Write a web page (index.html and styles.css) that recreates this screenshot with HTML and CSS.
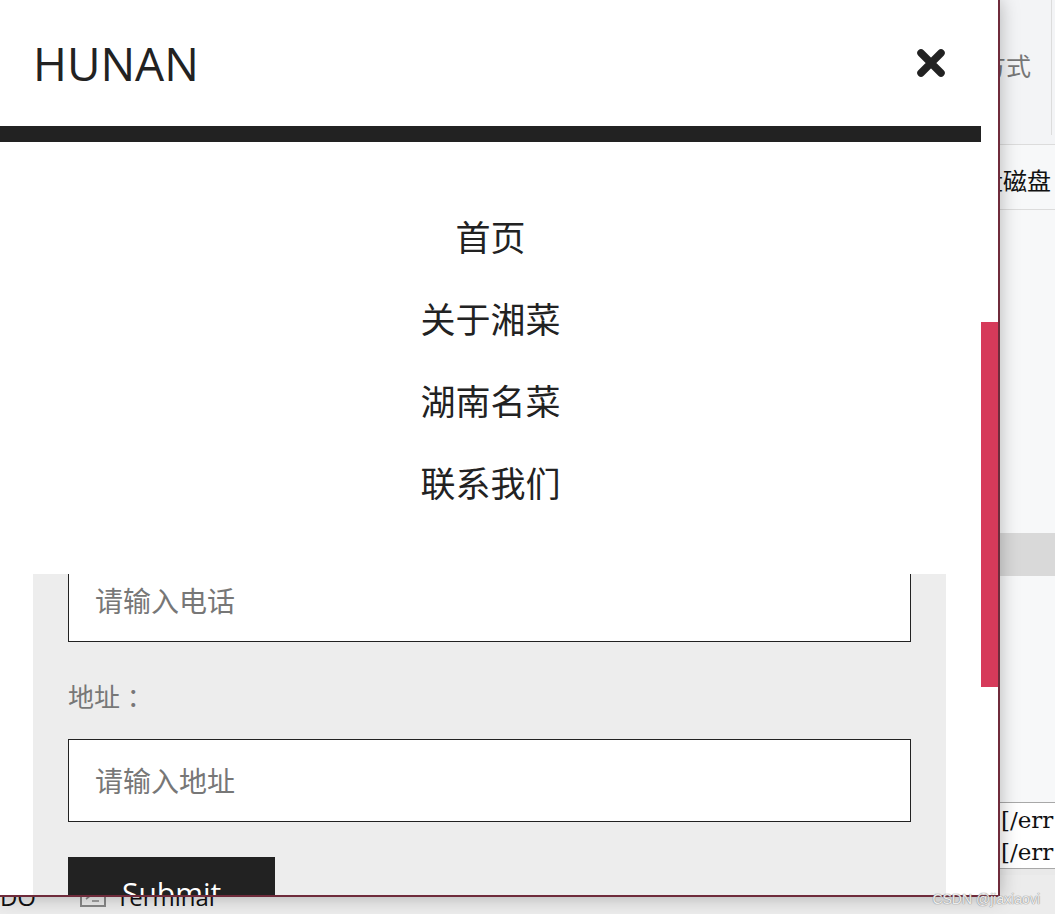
FILE: index.html
```html
<!DOCTYPE html>
<html lang="zh-CN">
<head>
  <meta charset="UTF-8">
  <title>HUNAN</title>
  <link rel="stylesheet" href="styles.css">
</head>
<body>
  <div class="screen">
    <div class="browser">
      <div class="page">
        <div class="menu">
          <div class="menu-head">
            <span class="logo">HUNAN</span>
            <button class="close" type="button">
              <svg width="30" height="30" viewBox="0 0 30 30">
                <path d="M5 5 L25 25 M25 5 L5 25" stroke="#222" stroke-width="7.5" stroke-linecap="round" fill="none"/>
              </svg>
            </button>
          </div>
          <div class="menu-bar"></div>
          <ul class="nav">
            <li>首页</li>
            <li>关于湘菜</li>
            <li>湖南名菜</li>
            <li>联系我们</li>
          </ul>
        </div>

        <form class="card">
          <label>电话 ：</label>
          <input type="text" placeholder="请输入电话">
          <label>地址 ：</label>
          <input type="text" placeholder="请输入地址">
          <button class="submit" type="button">Submit</button>
        </form>
      </div>
      <div class="track"><div class="thumb"></div></div>
    </div>

    <!-- window behind the browser -->
    <div class="side">
      <div class="side-top">
        <div class="side-tab"><span class="side-title">方式</span></div>
      </div>
      <div class="side-row"><span class="side-cut">盘</span>磁盘</div>
      <div class="side-blank"></div>
      <div class="side-band"></div>
      <div class="side-blank2"></div>
      <div class="side-log">
        <div>[/err</div>
        <div>[/err</div>
      </div>
      <div class="side-rest"></div>
    </div>

    <div class="dock">
      <span class="dock-todo">TODO</span>
      <span class="dock-icon">
        <svg width="26" height="20" viewBox="0 0 26 20">
          <rect x="1" y="1" width="24" height="18" fill="none" stroke="#888" stroke-width="2"/>
          <path d="M6 6 L10 9 L6 12 M12 14 L19 14" stroke="#888" stroke-width="1.6" fill="none"/>
        </svg>
      </span>
      <span class="dock-label">Terminal</span>
    </div>

    <div class="watermark">CSDN @jiaxiaovi</div>
  </div>
</body>
</html>
```

FILE: styles.css
```css
body {
  margin: 0;
  width: 1055px;
  height: 914px;
  overflow: hidden;
  background-color: #f4f4f4;
  font-family: "Open Sans", "Noto Sans CJK SC", sans-serif;
  color: #222;
}

.screen {
  position: relative;
  display: grid;
  grid-template-columns: 1000px 55px;
  grid-template-rows: 897px 17px;
  width: 1055px;
  height: 914px;
}

/* browser window */
.browser {
  grid-column: 1;
  grid-row: 1;
  position: relative;
  z-index: 2;
  display: flex;
  box-sizing: border-box;
  border-right: 2px solid #6f2b3b;
  border-bottom: 2px solid #6f2b3b;
  background-color: #fff;
  overflow: hidden;
  box-shadow: 0 0 18px rgba(0, 0, 0, 0.28);
}

.page {
  position: relative;
  flex: 1;
  background-color: #fff;
}

.track {
  width: 17px;
  background-color: #fff;
}

.thumb {
  margin-top: 322px;
  height: 365px;
  background-color: #d63a5a;
}

/* overlay menu */
.menu {
  position: absolute;
  top: 0;
  left: 0;
  right: 0;
  z-index: 1;
  background-color: #fff;
}

.menu-head {
  display: flex;
  justify-content: space-between;
  align-items: center;
  height: 126px;
  padding: 0 35px 0 33px;
}

.logo {
  font-size: 46px;
  line-height: 1;
  color: #222;
}

.close {
  display: flex;
  padding: 0;
  border: none;
  background: none;
  cursor: pointer;
}

.menu-bar {
  height: 16px;
  background-color: #222;
}

.nav {
  list-style: none;
  margin: 0;
  padding: 55px 0 49px;
}

.nav li {
  font-size: 35px;
  line-height: 82px;
  text-align: center;
  color: #222;
}

/* form under the menu */
.card {
  display: flex;
  flex-direction: column;
  margin: 462px 35px 0 33px;
  padding: 35px 35px 40px;
  background-color: #ededed;
}

.card label {
  font-size: 26px;
  line-height: 40px;
  color: #777;
  margin-bottom: 22px;
}

.card input {
  height: 83px;
  box-sizing: border-box;
  margin: 0 0 35px;
  padding: 0 26px;
  border: 1px solid #222;
  background-color: #fff;
  font-family: "Open Sans", "Noto Sans CJK SC", sans-serif;
  font-size: 28px;
  outline: none;
}

.card input::placeholder {
  color: #777;
}

.submit {
  align-self: flex-start;
  padding: 16px 54px;
  border: none;
  background-color: #222;
  color: #fff;
  font-family: "Open Sans", sans-serif;
  font-size: 30px;
  line-height: 40px;
}

/* background window */
.side {
  grid-column: 2;
  grid-row: 1 / 3;
  display: flex;
  flex-direction: column;
  background-color: #f7f8f9;
  font-family: "Noto Sans CJK SC", sans-serif;
}

.side-top {
  display: flex;
  height: 145px;
  box-sizing: border-box;
  border-bottom: 1px solid #dcdcdc;
  background-color: #f3f4f6;
}

.side-tab {
  width: 51px;
  height: 135px;
  border-right: 1px solid #dcdcdc;
  white-space: nowrap;
}

.side-title {
  display: block;
  margin: 50px 0 0 -19px;
  font-size: 25px;
  line-height: 30px;
  color: #777;
}

.side-row {
  height: 65px;
  box-sizing: border-box;
  padding-top: 20px;
  border-bottom: 1px solid #dcdcdc;
  font-size: 24px;
  line-height: 30px;
  color: #111;
  white-space: nowrap;
  margin-left: -21px;
}

.side-cut {
  display: inline-block;
  width: 24px;
}

.side-blank {
  height: 323px;
}

.side-band {
  height: 43px;
  background-color: #d9d9d9;
}

.side-blank2 {
  height: 226px;
}

.side-log {
  box-sizing: border-box;
  height: 67px;
  padding: 1px 0 0 1px;
  border-top: 1px solid #a8a8a8;
  border-bottom: 1px solid #a8a8a8;
  background-color: #fff;
  font-family: "DejaVu Serif", serif;
  font-size: 23px;
  line-height: 32px;
  color: #111;
  white-space: nowrap;
}

.side-rest {
  flex: 1;
  background-color: #e9e9e9;
}

/* tool strip at the bottom */
.dock {
  grid-column: 1 / 3;
  grid-row: 2;
  position: relative;
  z-index: 1;
  display: flex;
  align-items: center;
  gap: 10px;
  height: 39px;
  margin-top: -22px;
  padding-top: 4px;
  box-sizing: border-box;
  background-color: #ececec;
  font-size: 24px;
  line-height: 30px;
  color: #111;
  overflow: hidden;
  white-space: nowrap;
}

.dock-todo {
  margin-left: -32px;
  margin-right: 34px;
}

.dock-icon {
  display: flex;
}

.watermark {
  position: absolute;
  right: 15px;
  bottom: 7px;
  z-index: 3;
  font-family: "Liberation Sans", sans-serif;
  font-size: 14px;
  color: rgba(255, 255, 255, 0.85);
  text-shadow: 0 0 1px #888, 0 0 1px #888;
}
```
